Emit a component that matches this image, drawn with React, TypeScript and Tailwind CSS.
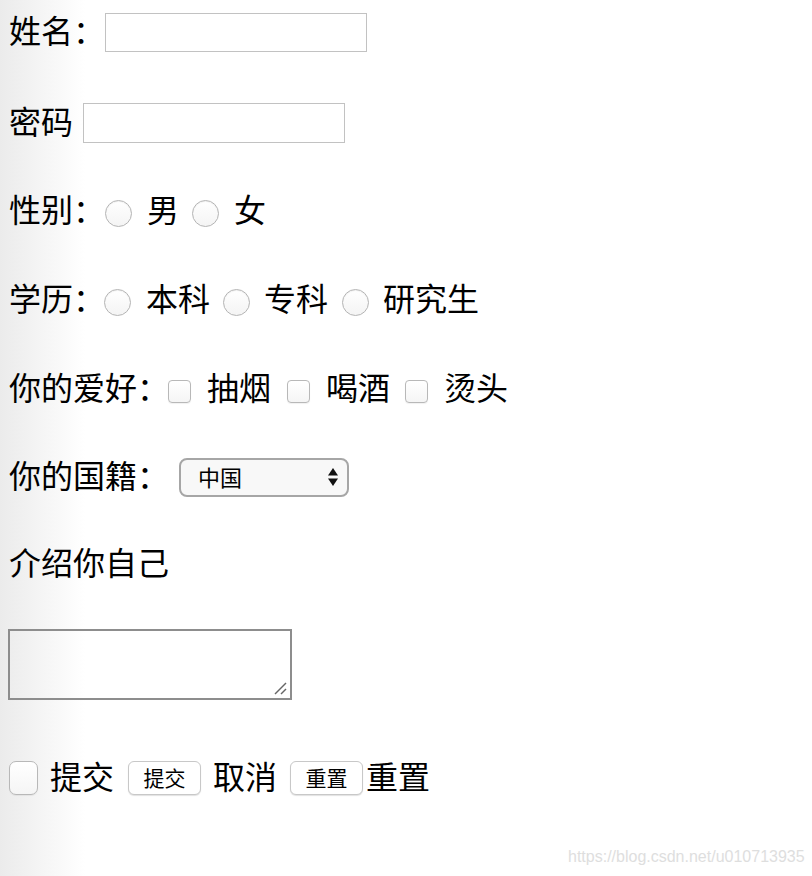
const font = "font-['Noto_Sans_CJK_SC','Noto_Sans',sans-serif]";

function Txt({ children, className = "" }: { children: React.ReactNode; className?: string }) {
  return (
    <span className={"shrink-0 whitespace-nowrap pb-[7px] " + className}>{children}</span>
  );
}

function Radio() {
  return (
    <span className="inline-block w-[27px] h-[27px] mt-[5px] rounded-full border border-[#b4b4b4] bg-[linear-gradient(to_bottom,#ffffff,#f4f4f4)] shadow-[inset_0_1px_1px_rgba(0,0,0,0.06)] shrink-0" />
  );
}

function Check({ className = "" }: { className?: string }) {
  return (
    <span
      className={
        "inline-block rounded-[4px] border border-[#b8b8b8] bg-[linear-gradient(to_bottom,#ffffff,#f5f5f5)] shadow-[0_1px_1px_rgba(0,0,0,0.06)] shrink-0 " +
        className
      }
    />
  );
}

function Btn({ label }: { label: string }) {
  return (
    <button className="shrink-0 w-[73px] h-[34px] rounded-[6px] border border-[#c8c8c8] bg-white shadow-[0_1px_1px_rgba(0,0,0,0.12)] text-[21px] leading-none text-black flex items-center justify-center pb-[2px]">
      {label}
    </button>
  );
}

export default function App() {
  return (
    <div
      className={`relative w-[812px] h-[876px] bg-[linear-gradient(to_right,#ebebeb,#ffffff_85px)] text-black text-[32px] leading-none ${font}`}
    >
      <div className="flex flex-col pl-[9px] pt-[13px]">
        {/* 姓名 */}
        <div className="flex items-center h-[39px]">
          <Txt className="w-[96px]">姓名：</Txt>
          <input className="shrink-0 w-[262px] h-[39px] border border-[#c2c2c2] bg-white outline-none" />
        </div>

        {/* 密码 */}
        <div className="flex items-center h-[40px] mt-[51px]">
          <Txt className="w-[74px]">密码</Txt>
          <input
            type="password"
            className="shrink-0 w-[262px] h-[40px] border border-[#c2c2c2] bg-white outline-none"
          />
        </div>

        {/* 性别 */}
        <div className="flex items-center h-[40px] mt-[48px]">
          <Txt className="w-[96px]">性别：</Txt>
          <Radio />
          <Txt className="ml-[15px] mr-[13px]">男</Txt>
          <Radio />
          <Txt className="ml-[15px]">女</Txt>
        </div>

        {/* 学历 */}
        <div className="flex items-center h-[40px] mt-[49px]">
          <Txt className="w-[95px]">学历：</Txt>
          <Radio />
          <Txt className="ml-[15px] mr-[13px]">本科</Txt>
          <Radio />
          <Txt className="ml-[14px] mr-[14px]">专科</Txt>
          <Radio />
          <Txt className="ml-[14px]">研究生</Txt>
        </div>

        {/* 爱好 */}
        <div className="flex items-center h-[40px] mt-[49px]">
          <Txt className="w-[159px]">你的爱好：</Txt>
          <Check className="w-[23px] h-[23px] mt-[4px]" />
          <Txt className="ml-[16px] mr-[16px]">抽烟</Txt>
          <Check className="w-[23px] h-[23px] mt-[4px]" />
          <Txt className="ml-[16px] mr-[15px]">喝酒</Txt>
          <Check className="w-[23px] h-[23px] mt-[4px]" />
          <Txt className="ml-[16px]">烫头</Txt>
        </div>

        {/* 国籍 */}
        <div className="flex items-center h-[40px] mt-[48px]">
          <Txt className="w-[170px]">你的国籍：</Txt>
          <div className="relative shrink-0 w-[170px] h-[39px] rounded-[8px] border-2 border-[#a6a6a6] bg-[#f8f8f8] flex items-center">
            <span className="ml-[17px] text-[22px] leading-none pb-[3px]">中国</span>
            <svg
              className="absolute right-[8px] top-1/2 -translate-y-1/2"
              width="12"
              height="20"
              viewBox="0 0 12 20"
            >
              <path d="M6 1 L11 8.5 L1 8.5 Z" fill="#111" />
              <path d="M6 19 L11 11.5 L1 11.5 Z" fill="#111" />
            </svg>
          </div>
        </div>

        {/* 介绍 */}
        <div className="flex items-center h-[40px] mt-[47px]">
          <Txt>介绍你自己</Txt>
        </div>

        {/* textarea */}
        <div className="relative w-[284px] h-[71px] mt-[45px] -ml-[1px] border-2 border-[#8d8d8d] bg-transparent">
          <svg
            className="absolute right-[2px] bottom-[2px]"
            width="16"
            height="16"
            viewBox="0 0 16 16"
          >
            <path d="M3 14 L14 3" stroke="#666" strokeWidth="1.5" />
            <path d="M9 14 L14 9" stroke="#666" strokeWidth="1.5" />
          </svg>
        </div>

        {/* buttons row */}
        <div className="flex items-center h-[40px] mt-[58px]">
          <Check className="w-[29px] h-[34px] rounded-[7px]" />
          <Txt className="ml-[12px] mr-[14px]">提交</Txt>
          <Btn label="提交" />
          <Txt className="ml-[12px] mr-[13px]">取消</Txt>
          <Btn label="重置" />
          <Txt className="ml-[3px]">重置</Txt>
        </div>
      </div>

      <div className="absolute left-[568px] top-[849px] text-[16px] leading-none text-[#dedede] font-['Liberation_Sans',sans-serif]">
        https://blog.csdn.net/u010713935
      </div>
    </div>
  );
}
